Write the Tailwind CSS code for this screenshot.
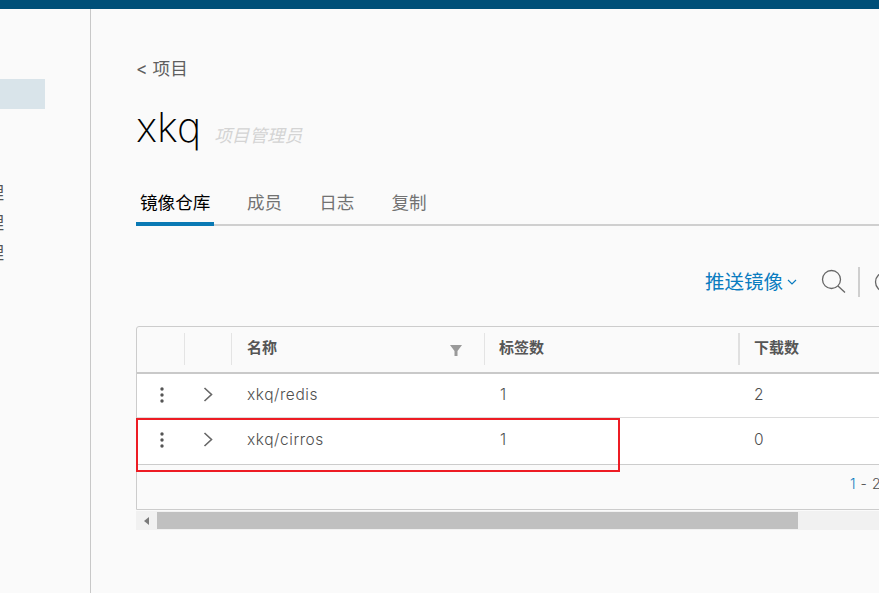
<!DOCTYPE html>
<html><head><meta charset="utf-8">
<script src="https://cdn.jsdelivr.net/npm/@tailwindcss/browser@4"></script>
</head>
<body class="m-0 h-[593px] w-[879px] overflow-hidden bg-[#fafafa] font-['Inter','Noto_Sans_CJK_SC',sans-serif] text-[#565656]">
<div class="relative flex h-[593px] w-[879px] flex-col overflow-hidden">
  <div class="h-[9px] shrink-0 bg-[#004f78]"></div>
  <div class="flex min-h-0 flex-1">
    <aside class="w-[91px] shrink-0 border-r border-[#c8c8c8] pt-[70px]">
      <div class="h-[30px] w-[45px] bg-[#d9e4ea]"></div>
      <div class="mt-[69px] flex flex-col items-start">
        <div class="-ml-[13px] h-[30px] text-[17px] leading-[30px] text-[#555]">理</div>
        <div class="-ml-[13px] h-[30px] text-[17px] leading-[30px] text-[#555]">理</div>
        <div class="-ml-[13px] h-[30px] text-[17px] leading-[30px] text-[#555]">理</div>
      </div>
    </aside>
    <main class="w-[900px] shrink-0 pl-[45px]">
      <div class="mt-[48px] h-[24px] text-[17.6px] leading-[24px] text-[#5f5f5f]">&lt; 项目</div>
      <div class="mt-[22px] flex h-[48px] items-end">
        <span class="text-[41px] leading-[48px] font-extralight text-black">xkq</span>
        <span class="mb-[3px] ml-[13px] text-[17.6px] leading-[24px] text-[#d4d4d4] italic">项目管理员</span>
      </div>
      <div class="mt-[33px] flex h-[42px] w-[743px] border-b-2 border-[#cfcfcf] text-[17.6px]">
        <div class="-mb-[2px] h-[42px] w-[78px] border-b-4 border-[#0979b4] pt-[7px] pl-[4px] leading-[24px] whitespace-nowrap text-black">镜像仓库</div>
        <div class="ml-[33px] pt-[7px] leading-[24px] text-[#727272]">成员</div>
        <div class="ml-[37px] pt-[7px] leading-[24px] text-[#727272]">日志</div>
        <div class="ml-[37px] pt-[7px] leading-[24px] text-[#727272]">复制</div>
      </div>
      <div class="mt-[41px] flex h-[30px] w-[760px] items-center justify-end">
        <span class="text-[19.5px] leading-[30px] text-[#0a7cc0]">推送镜像</span>
        <svg class="ml-[4px] h-[8px] w-[10px]" viewBox="0 0 10 8" fill="none" stroke="#0a7cc0" stroke-width="1.2"><path d="M1 2l4 4 4-4"/></svg>
        <svg class="ml-[24px] h-[26px] w-[26px]" viewBox="0 0 26 26" fill="none" stroke="#666" stroke-width="1.3"><circle cx="10.500" cy="10.500" r="9"/><path d="M17 17l7 6.500"/></svg>
        <div class="ml-[11px] h-[30px] w-[2px] bg-[#cfcfcf]"></div>
        <svg class="ml-[14px] h-[22px] w-[22px]" viewBox="0 0 22 22" fill="none" stroke="#666" stroke-width="1.3"><circle cx="11" cy="11" r="9.500"/></svg>
      </div>
      <div class="mt-[29px] w-[900px] rounded-t-[3px] border border-[#cccccc] text-[15.5px] font-light tracking-[0.55px] text-[#4f4f4f]">
        <div class="flex h-[47px] border-b-2 border-[#c9c9c9] pt-[6px] pb-[7px] text-[15px] font-bold tracking-normal text-[#565656]">
          <div class="w-[47px] shrink-0"></div>
          <div class="w-[47px] shrink-0 border-l border-[#e4e4e4]"></div>
          <div class="flex w-[253px] shrink-0 items-center justify-between border-l border-[#e4e4e4] pr-[22px] pl-[15px]"><span class="-mt-[2px] leading-[30px]">名称</span>
            <svg class="mt-[3px] h-[11px] w-[12px]" viewBox="0 0 12 11" fill="#9a9a9a"><path d="M0 0h12L7.500 6v5h-3V6z"/></svg></div>
          <div class="flex w-[254px] shrink-0 items-center border-l border-[#e4e4e4] pl-[14px]"><span class="-mt-[2px]">标签数</span></div>
          <div class="flex w-[254px] shrink-0 items-center border-l-2 border-[#e0e0e0] pl-[14px]"><span class="-mt-[2px]">下载数</span></div>
        </div>
        <div class="flex h-[44px] items-center border-b border-[#dcdcdc] bg-white pb-[2px]">
          <div class="flex w-[47px] shrink-0 justify-center pl-[3px]"><svg class="h-[16px] w-[4px]" viewBox="0 0 4 16" fill="#555"><circle cx="2" cy="2" r="1.700"/><circle cx="2" cy="8" r="1.700"/><circle cx="2" cy="14" r="1.700"/></svg></div>
          <div class="flex w-[48px] shrink-0 justify-center"><svg class="h-[15px] w-[10px]" viewBox="0 0 10 15" fill="none" stroke="#666" stroke-width="1.600"><path d="M1.500 1l7 6.500-7 6.500"/></svg></div>
          <div class="w-[253px] shrink-0 pl-[15px]">xkq/redis</div>
          <div class="w-[254px] shrink-0 pl-[15px]">1</div>
          <div class="w-[254px] shrink-0 pl-[15px]">2</div>
        </div>
        <div class="flex h-[47px] items-center border-b border-[#cccccc] bg-white pb-[3px]">
          <div class="flex w-[47px] shrink-0 justify-center pl-[3px]"><svg class="h-[16px] w-[4px]" viewBox="0 0 4 16" fill="#555"><circle cx="2" cy="2" r="1.700"/><circle cx="2" cy="8" r="1.700"/><circle cx="2" cy="14" r="1.700"/></svg></div>
          <div class="flex w-[48px] shrink-0 justify-center"><svg class="h-[15px] w-[10px]" viewBox="0 0 10 15" fill="none" stroke="#666" stroke-width="1.600"><path d="M1.500 1l7 6.500-7 6.500"/></svg></div>
          <div class="w-[253px] shrink-0 pl-[15px]">xkq/cirros</div>
          <div class="w-[254px] shrink-0 pl-[15px]">1</div>
          <div class="w-[254px] shrink-0 pl-[15px]">0</div>
        </div>
        <div class="h-[44px] pt-[7px] pl-[713px] text-[14px] leading-[24px]"><span class="text-[#0a7cc0]">1</span> - 2</div>
      </div>
      <div class="mt-[1px] flex h-[19px] w-[743px] items-center bg-[#f1f1f1]">
        <div class="flex w-[21px] shrink-0 justify-center"><svg class="h-[8px] w-[5px]" viewBox="0 0 5 8" fill="#7a7a7a"><path d="M5 0v8L0 4z"/></svg></div>
        <div class="h-[17px] w-[641px] bg-[#c0c0c0]"></div>
      </div>
    </main>
  </div>
  <div class="absolute top-[418px] left-[136px] h-[54px] w-[484px] border-2 border-[#ed1c24]"></div>
</div>
</body></html>
